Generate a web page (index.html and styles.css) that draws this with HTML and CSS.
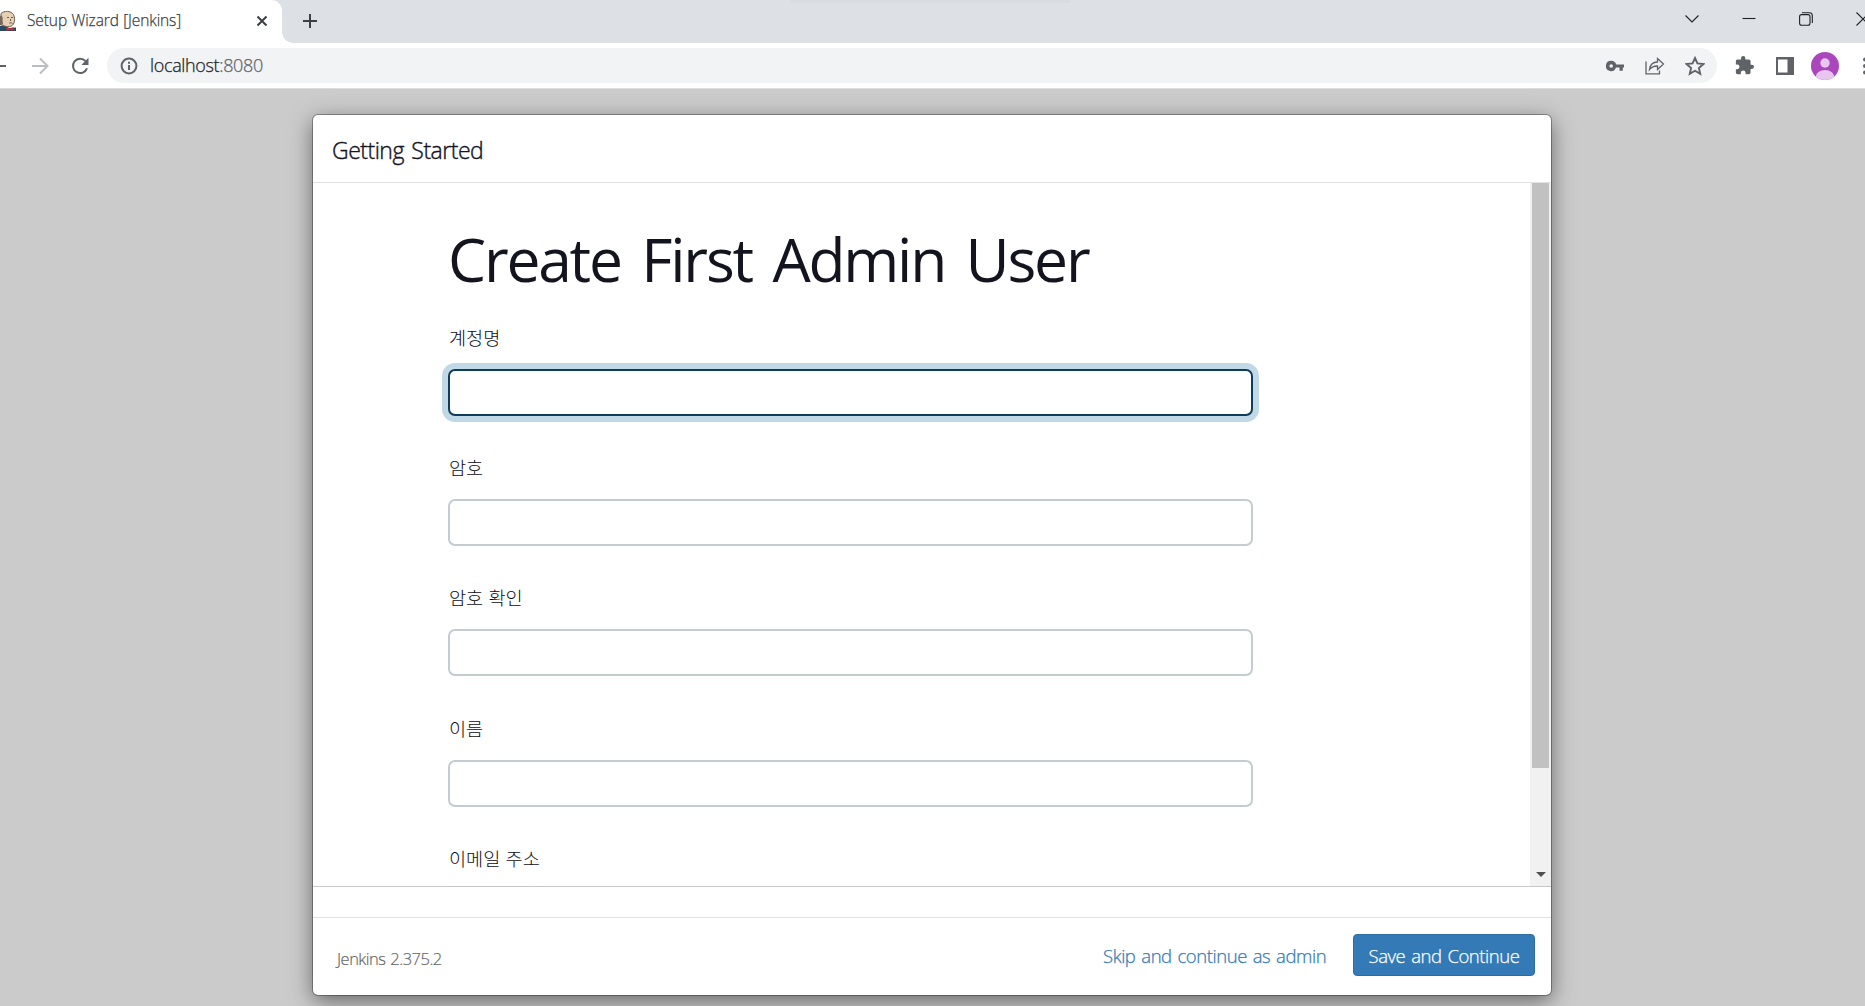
FILE: index.html
```
<!DOCTYPE html>
<html lang="ko">
<head>
  <meta charset="UTF-8" />
  <meta name="viewport" content="width=device-width, initial-scale=1.0"/>
  <title>Setup Wizard [Jenkins]</title>
  <link rel="stylesheet" href="styles.css">
</head>
<body>
  <div class="browser">

    <div class="tab-strip">
      <div class="tab">
        <svg class="favicon" viewBox="0 0 16 20">
          <path d="M0 15 L4 14 L9 17 L16 16.500 V20 H0 Z" fill="#2b4a63"/>
          <path d="M1 2.500 C4 -0.500 10.500 -0.500 13.500 3.500 C15 7 15 10 13.500 13 C11 17 4 16 1 13 Z" fill="#e6d0b4" stroke="#5d5048" stroke-width="0.900"/>
          <path d="M0 5 C1.500 4 3.500 6 2.500 9 L3 13 L0 14.500 Z" fill="#77695e"/>
          <path d="M7 6.500 H9 M11 6.500 H13 M9 12.500 C10 11.500 11 11.500 12.500 12.500 M10.500 8 V10" stroke="#5d5048" stroke-width="0.900" fill="none"/>
          <path d="M6.500 16 L10 17.500 L13.500 16 V20 L10 18.500 L6.500 20 Z" fill="#c9302c"/>
        </svg>
        <span class="tab-title">Setup Wizard [Jenkins]</span>
        <svg class="tab-close" viewBox="0 0 12 12"><path d="M1.500 1.500 L10.500 10.500 M10.500 1.500 L1.500 10.500"/></svg>
      </div>
      <svg class="new-tab" viewBox="0 0 16 16"><path d="M8 1 V15 M1 8 H15"/></svg>
      <div class="window-controls">
        <svg viewBox="0 0 14 14"><path d="M0.500 3.500 L7 10 L13.500 3.500"/></svg>
        <svg viewBox="0 0 14 14"><path d="M0.500 6.500 H13.500"/></svg>
        <svg viewBox="0 0 14 14"><rect x="0.600" y="2.600" width="10.400" height="10.600" rx="2"/><path d="M3 0.700 H10.500 Q13.300 0.700 13.300 3.500 V11"/></svg>
        <svg viewBox="0 0 14 14"><path d="M0.500 0.500 L13.500 13.500 M13.500 0.500 L0.500 13.500"/></svg>
      </div>
    </div>

    <div class="toolbar">
      <svg class="nav back" viewBox="0 0 18 18"><path d="M17 9 H2 M9 1.500 L1.500 9 L9 16.500"/></svg>
      <svg class="nav forward" viewBox="0 0 18 18"><path d="M1 9 H16 M9 1.500 L16.500 9 L9 16.500"/></svg>
      <svg class="nav reload" viewBox="0 0 18 18"><path d="M14.500 4 A7.200 7.200 0 1 0 16 11.200"/><path class="solid" d="M17.500 0.800 V8 H10.300 Z"/></svg>
      <div class="omnibox">
        <svg class="info" viewBox="0 0 18 18"><circle cx="9" cy="9" r="7.400"/><path d="M9 8 V13 M9 4.700 V6.700"/></svg>
        <span class="url">localhost<span class="port">:8080</span></span>
        <svg class="key" viewBox="0 0 18 12"><path fill-rule="evenodd" d="M5.200 0.800 A5.200 5.200 0 1 0 10 7.600 H13.500 V10.800 H16.800 V7.600 H18 V4.400 H10.200 A5.200 5.200 0 0 0 5.200 0.800 Z M5.200 4.200 A1.800 1.800 0 1 1 5.200 7.800 A1.800 1.800 0 1 1 5.200 4.200 Z"/></svg>
        <svg class="share" viewBox="0 0 20 18"><path d="M1 4.500 V16.800 H14.500 V13.500"/><path d="M4.500 12.500 C5 8 7.500 5.200 12.500 5 V1.500 L18.500 7 L12.500 12.500 V9 C9 9 6.500 10 4.500 12.500 Z"/></svg>
        <svg class="star" viewBox="0 0 18 18"><path d="M9 1.800 L11.200 6.700 L16.600 7.200 L12.500 10.800 L13.700 16.100 L9 13.300 L4.300 16.100 L5.500 10.800 L1.400 7.200 L6.800 6.700 Z"/></svg>
      </div>
      <svg class="puzzle" viewBox="1 1 22 22"><path d="M20.500 11H19V7c0-1.100-.9-2-2-2h-4V3.500a2.500 2.500 0 0 0-5 0V5H4c-1.100 0-2 .9-2 2v3.800h1.500a2.700 2.700 0 0 1 0 5.400H2V20c0 1.100.9 2 2 2h3.800v-1.500a2.700 2.700 0 0 1 5.400 0V22H17c1.100 0 2-.9 2-2v-4h1.500a2.500 2.500 0 0 0 0-5z"/></svg>
      <svg class="side-panel" viewBox="0 0 18 18"><path fill-rule="evenodd" d="M0 0 H18 V18 H0 Z M2 2.500 V15.500 H11.500 V2.500 Z"/></svg>
      <svg class="avatar" viewBox="0 0 28 28">
        <clipPath id="round"><circle cx="14" cy="14" r="14"/></clipPath>
        <circle cx="14" cy="14" r="14" fill="#ab47bc"/>
        <g clip-path="url(#round)" fill="#e9c6f0"><circle cx="14" cy="11" r="4.700"/><ellipse cx="14" cy="25" rx="9.300" ry="7"/></g>
      </svg>
      <svg class="more" viewBox="0 0 4 18"><circle cx="2" cy="2.500" r="2"/><circle cx="2" cy="9" r="2"/><circle cx="2" cy="15.500" r="2"/></svg>
    </div>
  </div>

  <div class="page">
    <div class="modal">
      <div class="modal-header">
        <h4 class="modal-title">Getting Started</h4>
      </div>
      <div class="modal-body">
        <form class="user-form">
          <h1>Create First Admin User</h1>
          <div class="form-group"><label for="username">계정명</label><input class="focused" id="username" type="text"></div>
          <div class="form-group"><label for="password1">암호</label><input id="password1" type="password"></div>
          <div class="form-group"><label for="password2">암호 확인</label><input id="password2" type="password"></div>
          <div class="form-group"><label for="fullname">이름</label><input id="fullname" type="text"></div>
          <div class="form-group"><label for="email">이메일 주소</label><input id="email" type="text"></div>
        </form>
        <div class="scrollbar">
          <div class="thumb"></div>
          <div class="arrow"></div>
        </div>
      </div>
      <div class="modal-gap"></div>
      <div class="modal-footer">
        <span class="version">Jenkins 2.375.2</span>
        <button class="btn btn-link" type="button"><span>Skip and continue as admin</span></button>
        <button class="btn btn-primary" type="button"><span>Save and Continue</span></button>
      </div>
    </div>
  </div>
</body>
</html>
```
FILE: styles.css
```
:root {
  --strip: #dde1e6;
  --icon: #5f6368;
  --text: #14141f;
  --blue: #337ab7;
  --latin: "Open Sans", "Noto Sans CJK KR", sans-serif;
}

* {
  box-sizing: border-box;
}

body {
  margin: 0;
  height: 100vh;
  display: flex;
  flex-direction: column;
  overflow: hidden;
  font-family: var(--latin);
  font-weight: 300;
  color: var(--text);
  background: #cbcbcb;
}

svg {
  display: block;
  flex: none;
  fill: none;
}

.tab-strip {
  height: 43px;
  display: flex;
  background: linear-gradient(#d9dce1, #d9dce1) 790px 0 / 280px 3px no-repeat var(--strip);
}

.tab {
  position: relative;
  width: 282px;
  display: flex;
  align-items: center;
  padding-bottom: 1px;
  background: #fff;
  border-top-right-radius: 11px;
}

/* curved foot of the active tab */
.tab::after {
  content: "";
  position: absolute;
  left: 100%;
  bottom: 0;
  width: 11px;
  height: 11px;
  background: radial-gradient(circle at 100% 0, transparent 10.5px, #fff 11px);
}

.favicon {
  width: 16px;
  height: 20px;
}

.tab-title {
  margin: -2px 0 0 11px;
  width: 229px;
  font-size: 15.5px;
  letter-spacing: -0.1px;
  word-spacing: 0.5px;
  color: #3c4043;
  -webkit-text-stroke: 0.25px;
  white-space: nowrap;
}

.tab-close {
  width: 12px;
  height: 12px;
  stroke: #3c4043;
  stroke-width: 2;
}

.new-tab {
  width: 16px;
  height: 16px;
  margin: 13px 0 0 20px;
  stroke: #3c4043;
  stroke-width: 2;
}

.window-controls {
  flex: none;
  display: flex;
  gap: 43px;
  margin: 12px -5px 0 auto;
}

.window-controls svg {
  width: 14px;
  height: 14px;
  stroke: #202124;
  stroke-width: 1.1;
}

.toolbar {
  height: 45px;
  display: flex;
  align-items: center;
  background: #fff;
}

.nav {
  width: 18px;
  height: 18px;
  stroke: var(--icon);
  stroke-width: 2;
}

.back {
  margin-left: -11px;
}

.forward {
  margin-left: 24px;
  stroke: #bbbdc0;
}

.reload {
  margin-left: 22px;
}

.solid {
  fill: var(--icon);
  stroke: none;
}

.omnibox {
  width: 1610px;
  height: 35px;
  flex: none;
  margin-left: 18px;
  display: flex;
  align-items: center;
  background: #f1f3f4;
  border-radius: 18px;
}

.info {
  width: 18px;
  height: 18px;
  margin-left: 13px;
  stroke: var(--icon);
  stroke-width: 2;
}

.url {
  margin: -2px 0 0 12px;
  width: 1456px;
  font-size: 18px;
  letter-spacing: -0.35px;
  color: #202124;
  -webkit-text-stroke: 0.25px;
}

.port {
  color: #5f6368;
}

.key {
  width: 18px;
  height: 12px;
  fill: var(--icon);
}

.share {
  width: 20px;
  height: 18px;
  margin-left: 21px;
  stroke: var(--icon);
  stroke-width: 1.3;
}

.star {
  width: 20px;
  height: 20px;
  margin-left: 20px;
  stroke: var(--icon);
  stroke-width: 1.7;
}

.puzzle {
  width: 19px;
  height: 19px;
  margin-left: 18px;
  fill: var(--icon);
}

.side-panel {
  width: 18px;
  height: 18px;
  margin-left: 22px;
  fill: var(--icon);
}

.avatar {
  width: 28px;
  height: 28px;
  margin-left: 17px;
}

.more {
  width: 4px;
  height: 18px;
  margin-left: 24px;
  fill: var(--icon);
}

.page {
  flex: 1;
  border-top: 1px solid #dcdcdc;
}

.modal {
  width: 1238px;
  height: 880px;
  margin: 26px 0 0 313px;
  display: flex;
  flex-direction: column;
  background: #fff;
  border-radius: 5px;
  box-shadow: 0 0 0 1px rgba(0, 0, 0, 0.3), 0 6px 22px rgba(0, 0, 0, 0.5);
}

.modal-header {
  height: 68px;
  padding: 0 19px;
  display: flex;
  align-items: center;
  border-bottom: 1px solid #e2e2e2;
}

.modal-title {
  margin: 2px 0 0;
  font-size: 23px;
  font-weight: 300;
  letter-spacing: -0.5px;
  word-spacing: 2px;
  -webkit-text-stroke: 0.4px;
}

.modal-body {
  height: 703px;
  display: flex;
  justify-content: space-between;
  overflow: hidden;
}

.user-form {
  width: 805px;
  margin-left: 135px;
}

h1 {
  margin: 34px 0 0;
  height: 105px;
  font-size: 60.5px;
  font-weight: 400;
  line-height: 84px;
  letter-spacing: -2.2px;
  word-spacing: 7px;
  white-space: nowrap;
}

.form-group {
  height: 130.2px;
}

label {
  display: block;
  height: 47px;
  padding-left: 1px;
  font-family: "Noto Sans CJK KR", sans-serif;
  font-size: 18.6px;
  font-weight: 300;
  line-height: 30px;
  color: #0c0c14;
}

input {
  display: block;
  width: 100%;
  height: 47px;
  padding: 8px;
  border: 2px solid #c3ccd1;
  border-radius: 7px;
  background: #fff;
}

.focused {
  border-color: #0f3c5a;
  box-shadow: 0 0 0 6px #c1d9e6;
}

.scrollbar {
  width: 21px;
  display: flex;
  flex-direction: column;
  justify-content: space-between;
  align-items: center;
  background: #f1f1f1;
}

.thumb {
  width: 17px;
  height: 585px;
  background: #c1c1c1;
}

.arrow {
  margin-bottom: 9px;
  border: 5px solid transparent;
  border-top-color: #505050;
  border-bottom: 0;
}

.modal-gap {
  height: 32px;
  border-top: 1px solid #c8c8c8;
  border-bottom: 1px solid #e2e2e2;
}

.modal-footer {
  flex: 1;
  display: flex;
  align-items: center;
  padding: 0 16px 3px 24px;
}

.version {
  margin-top: 6px;
  font-size: 16.5px;
  letter-spacing: -0.5px;
  word-spacing: 1px;
  color: #666;
  -webkit-text-stroke: 0.2px;
}

.btn {
  height: 42px;
  padding: 0;
  border: 0;
  font-family: var(--latin);
  font-size: 18.5px;
  font-weight: 300;
  letter-spacing: -0.45px;
  word-spacing: 1.5px;
  -webkit-text-stroke: 0.25px;
  white-space: nowrap;
}

.btn span {
  display: block;
  padding-top: 1px;
}

.btn-link {
  width: 222px;
  margin-left: auto;
  background: none;
  color: var(--blue);
  text-align: left;
}

.btn-primary {
  width: 182px;
  margin-left: 28px;
  border: 1px solid #2e6da4;
  border-radius: 4px;
  background: var(--blue);
  color: #fff;
}
```
